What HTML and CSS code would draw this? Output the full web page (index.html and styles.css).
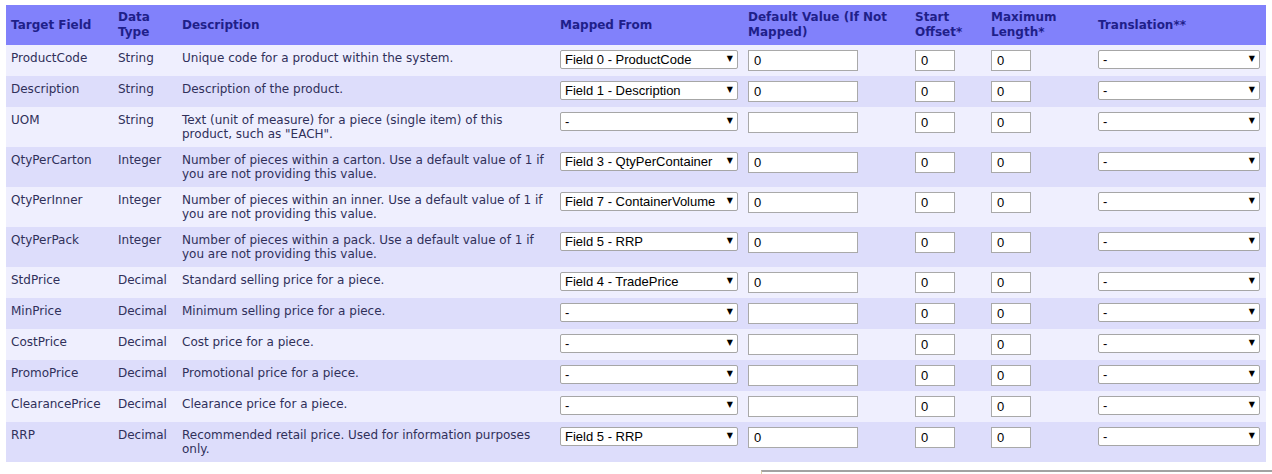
FILE: index.html
```html
<!DOCTYPE html>
<html lang="en">
<head>
  <meta charset="UTF-8">
  <title>Import Field Mapping</title>
  <link rel="stylesheet" href="styles.css">
</head>
<body>

  <!-- === Field mapping table === -->
  <table class="map-table">
    <colgroup>
      <col class="c-target">
      <col class="c-type">
      <col class="c-desc">
      <col class="c-from">
      <col class="c-default">
      <col class="c-start">
      <col class="c-max">
      <col class="c-trans">
    </colgroup>
    <thead>
      <tr>
        <th>Target Field</th>
        <th>Data Type</th>
        <th>Description</th>
        <th>Mapped From</th>
        <th>Default Value (If Not Mapped)</th>
        <th>Start Offset*</th>
        <th>Maximum Length*</th>
        <th>Translation**</th>
      </tr>
    </thead>
    <tbody>
      <tr>
        <td class="txt">ProductCode</td>
        <td class="txt">String</td>
        <td class="txt">Unique code for a product within the system.</td>
        <td><span class="pick wide"><select><option>Field 0 - ProductCode</option></select></span></td>
        <td><input class="inp-default" type="text" value="0"></td>
        <td><input class="inp-small" type="text" value="0"></td>
        <td><input class="inp-small" type="text" value="0"></td>
        <td><span class="pick trans"><select><option>-</option></select></span></td>
      </tr>
      <tr>
        <td class="txt">Description</td>
        <td class="txt">String</td>
        <td class="txt">Description of the product.</td>
        <td><span class="pick wide"><select><option>Field 1 - Description</option></select></span></td>
        <td><input class="inp-default" type="text" value="0"></td>
        <td><input class="inp-small" type="text" value="0"></td>
        <td><input class="inp-small" type="text" value="0"></td>
        <td><span class="pick trans"><select><option>-</option></select></span></td>
      </tr>
      <tr>
        <td class="txt">UOM</td>
        <td class="txt">String</td>
        <td class="txt">Text (unit of measure) for a piece (single item) of this product, such as "EACH".</td>
        <td><span class="pick wide"><select><option>-</option></select></span></td>
        <td><input class="inp-default" type="text" value=""></td>
        <td><input class="inp-small" type="text" value="0"></td>
        <td><input class="inp-small" type="text" value="0"></td>
        <td><span class="pick trans"><select><option>-</option></select></span></td>
      </tr>
      <tr>
        <td class="txt">QtyPerCarton</td>
        <td class="txt">Integer</td>
        <td class="txt">Number of pieces within a carton. Use a default value of 1 if you are not providing this value.</td>
        <td><span class="pick wide"><select><option>Field 3 - QtyPerContainer</option></select></span></td>
        <td><input class="inp-default" type="text" value="0"></td>
        <td><input class="inp-small" type="text" value="0"></td>
        <td><input class="inp-small" type="text" value="0"></td>
        <td><span class="pick trans"><select><option>-</option></select></span></td>
      </tr>
      <tr>
        <td class="txt">QtyPerInner</td>
        <td class="txt">Integer</td>
        <td class="txt">Number of pieces within an inner. Use a default value of 1 if you are not providing this value.</td>
        <td><span class="pick wide"><select><option>Field 7 - ContainerVolume</option></select></span></td>
        <td><input class="inp-default" type="text" value="0"></td>
        <td><input class="inp-small" type="text" value="0"></td>
        <td><input class="inp-small" type="text" value="0"></td>
        <td><span class="pick trans"><select><option>-</option></select></span></td>
      </tr>
      <tr>
        <td class="txt">QtyPerPack</td>
        <td class="txt">Integer</td>
        <td class="txt">Number of pieces within a pack. Use a default value of 1 if you are not providing this value.</td>
        <td><span class="pick wide"><select><option>Field 5 - RRP</option></select></span></td>
        <td><input class="inp-default" type="text" value="0"></td>
        <td><input class="inp-small" type="text" value="0"></td>
        <td><input class="inp-small" type="text" value="0"></td>
        <td><span class="pick trans"><select><option>-</option></select></span></td>
      </tr>
      <tr>
        <td class="txt">StdPrice</td>
        <td class="txt">Decimal</td>
        <td class="txt">Standard selling price for a piece.</td>
        <td><span class="pick wide"><select><option>Field 4 - TradePrice</option></select></span></td>
        <td><input class="inp-default" type="text" value="0"></td>
        <td><input class="inp-small" type="text" value="0"></td>
        <td><input class="inp-small" type="text" value="0"></td>
        <td><span class="pick trans"><select><option>-</option></select></span></td>
      </tr>
      <tr>
        <td class="txt">MinPrice</td>
        <td class="txt">Decimal</td>
        <td class="txt">Minimum selling price for a piece.</td>
        <td><span class="pick wide"><select><option>-</option></select></span></td>
        <td><input class="inp-default" type="text" value=""></td>
        <td><input class="inp-small" type="text" value="0"></td>
        <td><input class="inp-small" type="text" value="0"></td>
        <td><span class="pick trans"><select><option>-</option></select></span></td>
      </tr>
      <tr>
        <td class="txt">CostPrice</td>
        <td class="txt">Decimal</td>
        <td class="txt">Cost price for a piece.</td>
        <td><span class="pick wide"><select><option>-</option></select></span></td>
        <td><input class="inp-default" type="text" value=""></td>
        <td><input class="inp-small" type="text" value="0"></td>
        <td><input class="inp-small" type="text" value="0"></td>
        <td><span class="pick trans"><select><option>-</option></select></span></td>
      </tr>
      <tr>
        <td class="txt">PromoPrice</td>
        <td class="txt">Decimal</td>
        <td class="txt">Promotional price for a piece.</td>
        <td><span class="pick wide"><select><option>-</option></select></span></td>
        <td><input class="inp-default" type="text" value=""></td>
        <td><input class="inp-small" type="text" value="0"></td>
        <td><input class="inp-small" type="text" value="0"></td>
        <td><span class="pick trans"><select><option>-</option></select></span></td>
      </tr>
      <tr>
        <td class="txt">ClearancePrice</td>
        <td class="txt">Decimal</td>
        <td class="txt">Clearance price for a piece.</td>
        <td><span class="pick wide"><select><option>-</option></select></span></td>
        <td><input class="inp-default" type="text" value=""></td>
        <td><input class="inp-small" type="text" value="0"></td>
        <td><input class="inp-small" type="text" value="0"></td>
        <td><span class="pick trans"><select><option>-</option></select></span></td>
      </tr>
      <tr>
        <td class="txt">RRP</td>
        <td class="txt">Decimal</td>
        <td class="txt">Recommended retail price. Used for information purposes only.</td>
        <td><span class="pick wide"><select><option>Field 5 - RRP</option></select></span></td>
        <td><input class="inp-default" type="text" value="0"></td>
        <td><input class="inp-small" type="text" value="0"></td>
        <td><input class="inp-small" type="text" value="0"></td>
        <td><span class="pick trans"><select><option>-</option></select></span></td>
      </tr>
    </tbody>
  </table>

  <!-- Top edge of the next panel -->
  <div class="next-panel"></div>

</body>
</html>
```

FILE: styles.css
```css
/* Base styling */
body {
  margin: 0;
  background-color: #fff;
  font-family: 'DejaVu Sans', Verdana, sans-serif;
  font-size: 12px;
  color: #30305a;
}

/* Mapping table */
.map-table {
  width: 1260px;
  margin: 5px 0 0 6px;
  border-collapse: collapse;
  border-spacing: 0;
  table-layout: fixed;
}

.c-target  { width: 107px; }
.c-type    { width: 64px; }
.c-desc    { width: 378px; }
.c-from    { width: 188px; }
.c-default { width: 167px; }
.c-start   { width: 76px; }
.c-max     { width: 107px; }
.c-trans   { width: 173px; }

th {
  background-color: #8181fb;
  color: #1f1f8a;
  font-weight: bold;
  font-size: 12px;
  line-height: 15px;
  text-align: left;
  vertical-align: middle;
  padding: 5px 5px;
}

td {
  padding: 5px 5px;
  vertical-align: top;
  line-height: 14px;
}

td.txt {
  padding-top: 6px;
  padding-bottom: 6px;
}

tbody tr:nth-child(odd) {
  background-color: #efeffe;
}

tbody tr:nth-child(even) {
  background-color: #ddddfb;
}

/* Form controls */
input,
select {
  font-family: 'Liberation Sans', Arial, sans-serif;
  font-size: 13px;
  color: #000;
  background-color: #fff;
  box-sizing: border-box;
  margin: 0;
}

input {
  display: block;
  height: 21px;
  border: 1px solid #a9a9a9;
  padding: 0 5px;
}

.inp-default {
  width: 110px;
}

.inp-small {
  width: 40px;
}

/* Select with custom arrow */
.pick {
  position: relative;
  display: block;
}

.pick select {
  -webkit-appearance: none;
  appearance: none;
  width: 100%;
  height: 19px;
  border: 1px solid #a6a6a6;
  border-radius: 2px;
  padding: 0 18px 0 4px;
}

.pick::after {
  content: "\25BC";
  position: absolute;
  right: 5px;
  top: 4px;
  font-size: 8px;
  line-height: 10px;
  color: #000;
  pointer-events: none;
}

.pick.wide {
  width: 178px;
}

.pick.trans {
  width: 162px;
}

/* Edge of the panel below */
.next-panel {
  margin: 8px 0 0 761px;
  height: 10px;
  border-top: 2px solid #a2a2a2;
  border-left: 1px solid #d9cfa8;
}
```
